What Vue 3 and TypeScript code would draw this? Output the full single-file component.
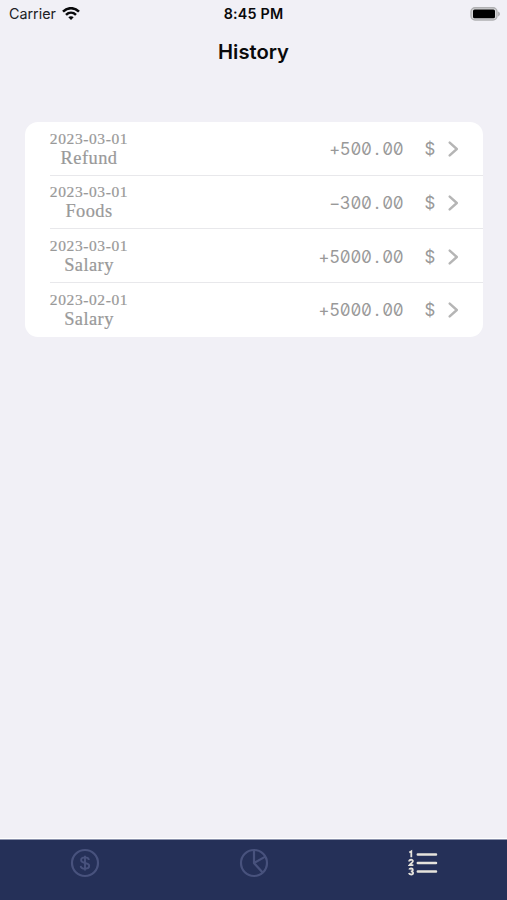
<script setup lang="ts">
interface Entry {
  date: string
  category: string
  amount: string
  currency: string
}

const entries: Entry[] = [
  { date: '2023-03-01', category: 'Refund', amount: '+500.00', currency: '$' },
  { date: '2023-03-01', category: 'Foods', amount: '−300.00', currency: '$' },
  { date: '2023-03-01', category: 'Salary', amount: '+5000.00', currency: '$' },
  { date: '2023-02-01', category: 'Salary', amount: '+5000.00', currency: '$' },
]

const whole = (amount: string): string => amount.split('.')[0]
const cents = (amount: string): string => amount.split('.')[1]
</script>

<template>
  <div class="screen">
    <header class="status">
      <div class="carrier">
        <span>Carrier</span>
        <svg class="wifi" width="18" height="14" viewBox="0 0 18 14" fill="none" stroke="#09090b" stroke-width="2.5">
          <path d="M1 4.6C5.6 0 12.4 0 17 4.6" />
          <path d="M4 7.9c2.9-2.8 7.1-2.8 10 0" />
          <path d="M6.3 10.3C7.8 8.8 10.2 8.8 11.7 10.3L9 13.1Z" fill="#09090b" stroke="none" />
        </svg>
      </div>
      <time class="clock">8:45 PM</time>
      <svg class="battery" width="31" height="14" viewBox="0 0 31 14">
        <rect x="1" y=".8" width="26" height="12.2" rx="4" fill="#d6d6d8" stroke="#b0b0b2" stroke-width="1.4" />
        <rect x="3" y="2.5" width="22" height="8.8" rx="1.6" fill="#000" />
        <path d="M28.2 4.6c2.2.8 2.2 4 0 4.8Z" fill="#a5a5a7" />
      </svg>
    </header>

    <h1 class="title">History</h1>

    <main class="content">
      <ul class="list">
        <li v-for="(entry, i) in entries" :key="i" class="row">
          <div class="label">
            <span class="date">{{ entry.date }}</span>
            <span class="category">{{ entry.category }}</span>
          </div>
          <span class="amount">{{ whole(entry.amount) }}<span class="point">.</span>{{ cents(entry.amount) }}</span>
          <span class="currency">{{ entry.currency }}</span>
          <svg class="chevron" width="11" height="16" viewBox="0 0 11 16" fill="none" stroke="#b5b5b5" stroke-width="2.4" stroke-linecap="round" stroke-linejoin="round">
            <path d="M1.7 1.6 8.8 8l-7.1 6.4" />
          </svg>
        </li>
      </ul>
    </main>

    <nav class="tabs">
      <button class="tab" aria-label="Money">
        <svg width="30" height="30" viewBox="0 0 30 30" fill="none" stroke="#48527d">
          <circle cx="15" cy="15" r="13" stroke-width="2.2" />
          <path d="M18.9 12c-.2-1.7-1.7-2.6-3.9-2.6-2.3 0-3.9 1-3.9 2.8 0 3.8 8.1 1.8 8.1 5.6 0 1.9-1.7 2.9-4.2 2.9s-4.1-1.1-4.3-2.9M15 7.8v14.6" stroke-width="1.9" />
        </svg>
      </button>
      <button class="tab" aria-label="Chart">
        <svg width="30" height="30" viewBox="0 0 30 30" fill="none" stroke="#48527d" stroke-width="2.2">
          <circle cx="15" cy="15" r="13" />
          <path d="M15 2v13l8.6 9.6M15 15l11.3-6.4" />
        </svg>
      </button>
      <button class="tab" aria-label="List">
        <svg width="30" height="30" viewBox="0 0 30 30" fill="none" stroke="#e6e3dc">
          <path d="M9.8 6.5h18.2M9.8 15h18.2M9.8 23.5h18.2" stroke-width="2.5" stroke-linecap="round" />
          <path d="M1.3 4.5l2-1.2v5.9M1.1 13.5c.2-2.4 4-2.2 3.8-.2-.1 1.4-2.3 2.3-3.5 3.9h4M1.2 21.6c.5-1.6 3.7-1.4 3.6.3 0 1-.8 1.4-2 1.4 1.4 0 2.3.5 2.3 1.7 0 2-3.7 2-4.2.1" stroke-width="1.8" />
        </svg>
      </button>
    </nav>
  </div>
</template>

<style>
body {
  background: #f1f0f6;
}
</style>

<style scoped>
.screen {
  display: flex;
  flex-direction: column;
  height: 900px;
  overflow: hidden;
  background: #f1f0f6;
  font-family: Inter, "Liberation Sans", sans-serif;
  color: #09090b;
}
.status {
  display: grid;
  grid-template-columns: 1fr auto 1fr;
  align-items: center;
  height: 27px;
  padding: 0 6px 0 9px;
}
.carrier {
  display: flex;
  align-items: center;
  gap: 6px;
  font-size: 14.3px;
  line-height: 20px;
  color: #202023;
}
.clock {
  margin-right: 3px;
  font-size: 14.3px;
  font-weight: 600;
  line-height: 20px;
  letter-spacing: 0.2px;
}
.battery {
  justify-self: end;
}
.title {
  margin: 10px 0 0;
  font-size: 20.2px;
  font-weight: 600;
  line-height: 30px;
  letter-spacing: 0;
  text-align: center;
}
.content {
  flex: 1;
  padding: 55px 24px 0 25px;
}
.list {
  margin: 0;
  padding: 0;
  list-style: none;
  overflow: hidden;
  border-radius: 13px;
  background: #fff;
}
.row {
  display: flex;
  align-items: center;
  box-sizing: border-box;
  height: 53.7px;
  margin-left: 25px;
  padding: 1.6px 24px 0 0;
  border-bottom: 1px solid #e8e8eb;
  color: #999;
}
.row:last-child {
  border-bottom-color: transparent;
}
.label {
  display: flex;
  flex-direction: column;
  align-items: center;
  width: 78px;
  margin-right: auto;
  padding-bottom: 1.2px;
  font-family: "Liberation Serif", serif;
  white-space: nowrap;
  -webkit-text-stroke: 0.2px #999;
}
.date {
  font-size: 15.5px;
  line-height: 18px;
  letter-spacing: 0.6px;
}
.category {
  font-size: 18.4px;
  line-height: 20px;
  letter-spacing: 0.45px;
}
.amount,
.currency {
  font-size: 16.8px;
  font-weight: 400;
  line-height: 22px;
  letter-spacing: -0.25px;
  font-feature-settings: "tnum", "zero";
  white-space: pre;
}
.point {
  display: inline-block;
  width: 10.5px;
  text-align: center;
}
.currency {
  margin: 0 13px 0 21px;
}
.chevron {
  flex: none;
}
.tabs {
  display: grid;
  grid-template-columns: repeat(3, 1fr);
  box-sizing: border-box;
  height: 62px;
  padding-top: 9px;
  border-top: 1px solid #fff;
  background: linear-gradient(#8c93ad 0 1px, #253058 1px);
}
.tab {
  display: flex;
  justify-content: center;
  align-items: flex-start;
  padding: 0;
  border: 0;
  background: none;
}
</style>
